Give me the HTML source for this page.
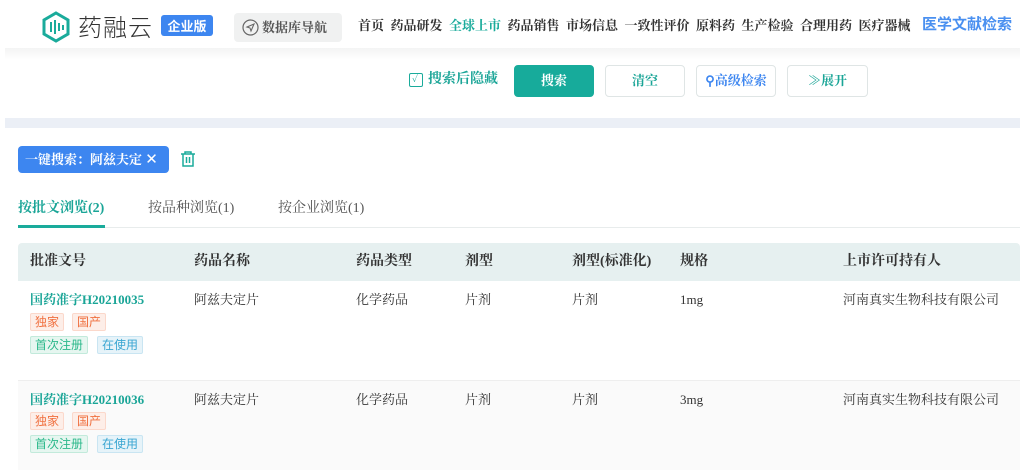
<!DOCTYPE html>
<html><head><meta charset="utf-8"><style>
*{margin:0;padding:0;box-sizing:border-box}
body{width:1028px;height:470px;overflow:hidden;background:#fff;font-family:"Liberation Serif","Noto Serif CJK SC",serif;color:#333;position:relative}
.a{position:absolute;white-space:nowrap;line-height:18px}
.nav{font-size:13px;color:#333;top:17px;font-weight:bold}
.btn{position:absolute;top:65px;height:32px;border:1px solid #dfe5e5;border-radius:4px;font-size:13px;color:#1aa597;text-align:center;line-height:30px;font-weight:bold;background:#fff}
.th{top:253px;font-size:14px;font-weight:bold;color:#333}
.td{font-size:13px;color:#333}
.tag{position:absolute;height:18px;font-size:12px;line-height:16px;padding:0 4px;border-radius:2px;font-family:"Liberation Sans","Noto Sans CJK SC",sans-serif}
.o{background:#fdeee8;border:1px solid #fbd8cb;color:#f0703f}
.g{background:#e6f6f0;border:1px solid #c2eadb;color:#2bb88a}
.b{background:#e6f3f9;border:1px solid #c9e5f2;color:#3aa6d2}
.lk{color:#1aa597;font-size:13px;font-weight:bold}
</style></head><body>
<svg class="a" style="left:40px;top:11px" width="32" height="32" viewBox="0 0 32 32"><path d="M16 2 L28 9 V23 L16 30 L4 23 V9 Z" fill="none" stroke="#1aab9b" stroke-width="3"/><g fill="#1aab9b"><rect x="10" y="11" width="2" height="10"/><rect x="14" y="9" width="2" height="14"/><rect x="18" y="12" width="2" height="8"/><rect x="22" y="14" width="2" height="5"/></g></svg>
<div class="a" style="left:78px;top:12px;font-size:24px;line-height:28px;color:#333;font-family:'Noto Sans CJK SC',sans-serif;font-weight:300;letter-spacing:1px">药融云</div>
<div class="a" style="left:161px;top:15px;width:52px;height:21px;background:#3d86f0;border-radius:3px;color:#fff;font-size:13px;font-weight:bold;text-align:center;line-height:21px;font-family:'Noto Sans CJK SC',sans-serif">企业版</div>
<div class="a" style="left:234px;top:13px;width:108px;height:29px;background:#f0f1f1;border-radius:4px;font-size:13px;color:#555;line-height:29px;padding-left:28px;font-weight:bold">数据库导航</div>
<svg class="a" style="left:242px;top:19px" width="17" height="17" viewBox="0 0 17 17"><circle cx="8.5" cy="8.5" r="7.5" fill="none" stroke="#666" stroke-width="1.2"/><path d="M5 8 L12 5 L9 12 L8 9 Z" fill="none" stroke="#666" stroke-width="1.1"/></svg>
<div class="a nav" style="left:358px">首页 &nbsp;药品研发 &nbsp;<span style="color:#1aab9b">全球上市</span> &nbsp;药品销售 &nbsp;市场信息 &nbsp;一致性评价 &nbsp;原料药 &nbsp;生产检验 &nbsp;合理用药 &nbsp;医疗器械</div>
<div class="a" style="left:922px;top:15px;font-size:15px;color:#4a90f0;font-family:'Noto Sans CJK SC',sans-serif;font-weight:bold">医学文献检索</div>
<div class="a" style="left:5px;top:48px;width:1015px;height:12px;background:linear-gradient(#f3f4f4,#fff)"></div>
<div class="a" style="left:409px;top:73px;width:14px;height:14px;border:1px solid #1aab9b;border-radius:2px"></div>
<div class="a" style="left:412px;top:71px;font-size:10px;color:#1aab9b">✓</div>
<div class="a" style="left:428px;top:71px;font-size:14px;color:#1aa597;font-weight:bold">搜索后隐藏</div>
<div class="btn" style="left:514px;width:80px;background:#17ab9b;border-color:#17ab9b;color:#fff">搜索</div>
<div class="btn" style="left:605px;width:80px">清空</div>
<div class="btn" style="left:696px;width:80px;color:#3d86f0">⚲高级检索</div>
<div class="btn" style="left:787px;width:81px">≫展开</div>
<div class="a" style="left:5px;top:118px;width:1015px;height:10px;background:#ebeff6"></div>
<div class="a" style="left:18px;top:146px;width:151px;height:27px;background:#3d86f0;border-radius:4px;color:#fff;font-size:13px;line-height:27px;padding-left:7px;font-weight:bold">一键搜索：阿兹夫定 <span style="font-weight:normal;font-size:15px;font-family:'Liberation Sans'">✕</span></div>
<svg class="a" style="left:179px;top:150px" width="18" height="18" viewBox="0 0 18 18" fill="none" stroke="#1aab9b" stroke-width="1.5"><path d="M2 4 H16 M6 4 V2 H12 V4 M4 4 V16 H14 V4 M7.5 7 V13 M10.5 7 V13"/></svg>
<div class="a" style="left:18px;top:200px;font-size:14px;color:#1aa597;font-weight:bold">按批文浏览(2)</div>
<div class="a" style="left:148px;top:200px;font-size:14px;color:#555">按品种浏览(1)</div>
<div class="a" style="left:278px;top:200px;font-size:14px;color:#555">按企业浏览(1)</div>
<div class="a" style="left:18px;top:227px;width:1002px;height:1px;background:#e8ecec"></div>
<div class="a" style="left:18px;top:225px;width:87px;height:3px;background:#1aab9b"></div>
<div class="a" style="left:18px;top:243px;width:1002px;height:38px;background:#e6f0f0;border-radius:4px 4px 0 0"></div>
<div class="a th" style="left:30px">批准文号</div><div class="a th" style="left:194px">药品名称</div><div class="a th" style="left:356px">药品类型</div><div class="a th" style="left:465px">剂型</div><div class="a th" style="left:572px">剂型(标准化)</div><div class="a th" style="left:680px">规格</div><div class="a th" style="left:843px">上市许可持有人</div>
<div class="a" style="left:18px;top:380px;width:1002px;height:90px;background:#fafafa;border-top:1px solid #eee"></div>
<div class="a lk" style="left:30px;top:291px">国药准字H20210035</div>
<div class="a td" style="left:194px;top:291px">阿兹夫定片</div><div class="a td" style="left:356px;top:291px">化学药品</div><div class="a td" style="left:465px;top:291px">片剂</div><div class="a td" style="left:572px;top:291px">片剂</div><div class="a td" style="left:680px;top:291px">1mg</div><div class="a td" style="left:843px;top:291px">河南真实生物科技有限公司</div>
<div class="tag o" style="left:30px;top:313px">独家</div><div class="tag o" style="left:72px;top:313px">国产</div>
<div class="tag g" style="left:30px;top:336px">首次注册</div><div class="tag b" style="left:97px;top:336px">在使用</div>
<div class="a lk" style="left:30px;top:391px">国药准字H20210036</div>
<div class="a td" style="left:194px;top:391px">阿兹夫定片</div><div class="a td" style="left:356px;top:391px">化学药品</div><div class="a td" style="left:465px;top:391px">片剂</div><div class="a td" style="left:572px;top:391px">片剂</div><div class="a td" style="left:680px;top:391px">3mg</div><div class="a td" style="left:843px;top:391px">河南真实生物科技有限公司</div>
<div class="tag o" style="left:30px;top:412px">独家</div><div class="tag o" style="left:72px;top:412px">国产</div>
<div class="tag g" style="left:30px;top:435px">首次注册</div><div class="tag b" style="left:97px;top:435px">在使用</div>
</body></html>
